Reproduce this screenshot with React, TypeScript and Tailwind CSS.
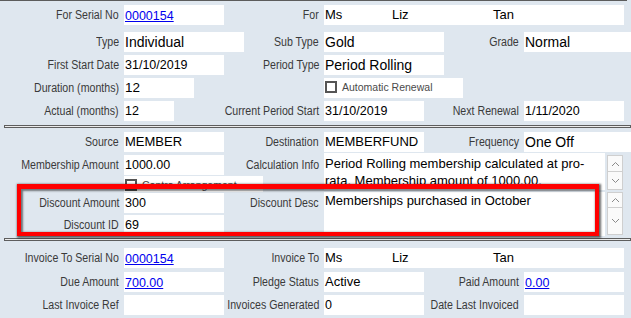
import React from "react";

const LBLC =
  "flex justify-end pr-[5px] whitespace-nowrap leading-[20px] h-[20px] text-[12.5px] text-[#3a3a3a]";
const BOX = "bg-white h-[20px] leading-[20px] pl-[1px] text-black whitespace-nowrap overflow-hidden";
const LINK = "text-[#0000ee] underline text-[12.5px]";
const ROW = "grid grid-cols-[124px_100px_100px_100px_100px_107px] h-[20px]";

function L({ children, className = "" }: { children?: React.ReactNode; className?: string }) {
  return (
    <div className={`${LBLC} ${className}`}>
      <span className="inline-block shrink-0 origin-right scale-x-[0.85]">{children}</span>
    </div>
  );
}

function Chevron({ up }: { up?: boolean }) {
  return (
    <svg width="9" height="6" viewBox="0 0 9 6" fill="none">
      <polyline
        points={up ? "1,5 4.5,1.5 8,5" : "1,1 4.5,4.5 8,1"}
        stroke="#8a8a8a"
        strokeWidth="1"
      />
    </svg>
  );
}

function Scroll({ upH, downH, mt }: { upH: string; downH: string; mt: string }) {
  return (
    <div className={`ml-[2px] w-[16px] flex flex-col ${mt}`}>
      <div className={`${upH} border border-[#cfcfcf] bg-[#fafafa] flex items-center justify-center`}>
        <Chevron up />
      </div>
      <div className={`${downH} border border-t-0 border-[#cfcfcf] bg-[#fafafa] flex items-center justify-center`}>
        <Chevron />
      </div>
    </div>
  );
}

function Check({ label, w, h }: { label: string; w: string; h: string }) {
  return (
    <div className={`bg-white ${w} ${h} flex items-start pt-[3px] pl-[1px]`}>
      <div className="w-[12px] h-[12px] border-2 border-[#555] bg-white shrink-0" />
      <span className="ml-[5px] text-[10.5px] leading-[13px] text-[#4a4a4a] whitespace-nowrap">{label}</span>
    </div>
  );
}

function Divider({ mt }: { mt: string }) {
  return <div className={`${mt} ml-[4px] h-[3px] border-y border-x border-[#5e5e5e] bg-[#ececec]`} />;
}

export default function App() {
  return (
    <div className="relative w-[631px] h-[318px] overflow-hidden bg-[#dfe7ef] font-['Liberation_Sans',Arial,sans-serif]">
      <div className="w-[627px] h-px bg-[#5c5c5c]" />

      {/* Section 1 */}
      <div className={`${ROW} mt-[4px]`}>
        <L>For Serial No</L>
        <div className={`${BOX} w-[100px]`}>
          <span className={LINK}>0000154</span>
        </div>
        <L>For</L>
        <div className={`${BOX} col-span-3 w-[300px] pl-0 flex text-[13px]`}>
          <span className="w-[67px]">Ms</span>
          <span className="w-[101px]">Liz</span>
          <span>Tan</span>
        </div>
      </div>

      <div className={`${ROW} mt-[7px]`}>
        <L>Type</L>
        <div className={`${BOX} w-[120px] text-[14px]`}>Individual</div>
        <L>Sub Type</L>
        <div className={`${BOX} w-[120px] pl-0 text-[14px]`}>Gold</div>
        <L>Grade</L>
        <div className={`${BOX} w-[107px] pl-0 text-[14px]`}>Normal</div>
      </div>

      <div className={`${ROW} mt-[3px]`}>
        <L>First Start Date</L>
        <div className={`${BOX} w-[100px] text-[12.5px]`}>31/10/2019</div>
        <L>Period Type</L>
        <div className={`${BOX} w-[120px] pl-0 text-[14px]`}>Period Rolling</div>
      </div>

      <div className={`${ROW} mt-[3px]`}>
        <L>Duration (months)</L>
        <div className={`${BOX} w-[70px] text-[13.5px]`}>12</div>
        <div />
        <div className="col-span-2">
          <Check label="Automatic Renewal" w="w-[139px]" h="h-[20px]" />
        </div>
      </div>

      <div className={`${ROW} mt-[3px]`}>
        <L>Actual (months)</L>
        <div className={`${BOX} w-[50px] text-[12.5px]`}>12</div>
        <L>Current Period Start</L>
        <div className={`${BOX} w-[100px] pl-0 text-[12.5px]`}>31/10/2019</div>
        <L>Next Renewal</L>
        <div className={`${BOX} w-[100px] text-[12.5px]`}>1/11/2020</div>
      </div>

      <Divider mt="mt-[4px]" />

      {/* Section 2 */}
      <div className={`${ROW} mt-[4px]`}>
        <L>Source</L>
        <div className={`${BOX} w-[100px] text-[13px]`}>MEMBER</div>
        <L>Destination</L>
        <div className={`${BOX} w-[100px] pl-0 text-[13px]`}>MEMBERFUND</div>
        <L>Frequency</L>
        <div className={`${BOX} w-[107px] pl-0 text-[14px]`}>One Off</div>
      </div>

      <div className="flex h-[84px]">
        {/* left column */}
        <div className="w-[224px] shrink-0 flex flex-col">
          <div className="flex mt-[3px]">
            <L className="w-[124px] shrink-0">Membership Amount</L>
            <div className={`${BOX} w-[100px] text-[12.5px]`}>1000.00</div>
          </div>
          <div className="flex mt-[1px]">
            <div className="w-[124px] shrink-0" />
            <div className="w-[139px] shrink-0">
              <Check label="Contra Arrangement" w="w-[139px]" h="h-[16px]" />
            </div>
          </div>
          <div className="flex mt-[1px]">
            <L className="w-[124px] shrink-0">Discount Amount</L>
            <div className={`${BOX} w-[100px] text-[12.5px]`}>300</div>
          </div>
          <div className="flex mt-[2px]">
            <L className="w-[124px] shrink-0">Discount ID</L>
            <div className={`${BOX} w-[100px] text-[12.5px]`}>69</div>
          </div>
        </div>

        {/* right part */}
        <div className="flex flex-col">
          <div className="flex mt-[1px]">
            <L className="w-[100px] shrink-0 mt-[2px]">Calculation Info</L>
            <div className="w-[281px] h-[37px] bg-white pt-[1.5px] pl-[1px] text-[13px] leading-[17px] text-black overflow-hidden whitespace-nowrap">
              <div>Period Rolling membership calculated at pro-</div>
              <div>rata. Membership amount of 1000.00.</div>
            </div>
            <Scroll upH="h-[17px]" downH="h-[18px]" mt="mt-[2px]" />
          </div>
          <div className="flex mt-[2px]">
            <L className="w-[100px] shrink-0 mt-[1px]">Discount Desc</L>
            <div className="w-[281px] h-[44px] bg-white pl-[1px] text-[13px] leading-[17px] text-black overflow-hidden">
              Memberships purchased in October
            </div>
            <Scroll upH="h-[16px]" downH="h-[27px]" mt="mt-0" />
          </div>
        </div>
      </div>

      <Divider mt="mt-[2px]" />

      {/* Section 3 */}
      <div className={`${ROW} mt-[7px]`}>
        <L>Invoice To Serial No</L>
        <div className={`${BOX} w-[100px]`}>
          <span className={LINK}>0000154</span>
        </div>
        <L>Invoice To</L>
        <div className={`${BOX} col-span-3 w-[300px] pl-0 flex text-[13px]`}>
          <span className="w-[67px]">Ms</span>
          <span className="w-[101px]">Liz</span>
          <span>Tan</span>
        </div>
      </div>

      <div className={`${ROW} mt-[4px]`}>
        <L>Due Amount</L>
        <div className={`${BOX} w-[100px]`}>
          <span className={LINK}>700.00</span>
        </div>
        <L>Pledge Status</L>
        <div className={`${BOX} w-[100px] pl-0 text-[13px]`}>Active</div>
        <L>Paid Amount</L>
        <div className={`${BOX} w-[100px]`}>
          <span className={LINK}>0.00</span>
        </div>
      </div>

      <div className={`${ROW} mt-[3px]`}>
        <L>Last Invoice Ref</L>
        <div className={`${BOX} w-[100px]`}></div>
        <L>Invoices Generated</L>
        <div className={`${BOX} w-[100px] pl-0 text-[12.5px]`}>0</div>
        <L>Date Last Invoiced</L>
        <div className={`${BOX} w-[100px]`}></div>
      </div>

      {/* Red annotation box */}
      <div className="absolute left-[17px] top-[184px] w-[582px] h-[52px] border-[4px] border-t-[5px] border-[#ff0000] shadow-[1px_1px_2px_1px_rgba(0,0,0,0.6),inset_1px_1px_2px_1px_rgba(0,0,0,0.5)]" />
    </div>
  );
}
